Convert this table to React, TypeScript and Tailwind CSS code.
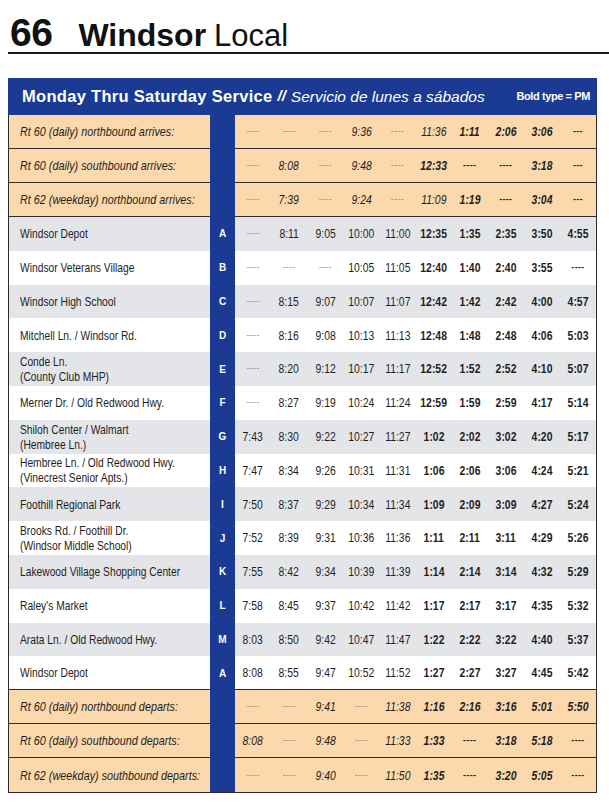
import React from "react";

const font = { fontFamily: '"Liberation Sans", Arial, sans-serif' };

type Row = {
  name: string[];
  letter?: string;
  times: string[];
  boldFrom: number;
  orange?: boolean;
  lineBelow?: boolean;
};

const rows: Row[] = [
  { name: ["Rt 60 (daily) northbound arrives:"], orange: true, boldFrom: 6, times: ["----", "----", "----", "9:36", "----", "11:36", "1:11", "2:06", "3:06", "---"] },
  { name: ["Rt 60 (daily) southbound arrives:"], orange: true, boldFrom: 5, times: ["----", "8:08", "----", "9:48", "----", "12:33", "----", "----", "3:18", "---"] },
  { name: ["Rt 62 (weekday) northbound arrives:"], orange: true, boldFrom: 6, times: ["----", "7:39", "----", "9:24", "----", "11:09", "1:19", "----", "3:04", "---"] },
  { name: ["Windsor Depot"], letter: "A", boldFrom: 5, times: ["----", "8:11", "9:05", "10:00", "11:00", "12:35", "1:35", "2:35", "3:50", "4:55"] },
  { name: ["Windsor Veterans Village"], letter: "B", boldFrom: 5, times: ["----", "----", "----", "10:05", "11:05", "12:40", "1:40", "2:40", "3:55", "----"] },
  { name: ["Windsor High School"], letter: "C", boldFrom: 5, times: ["----", "8:15", "9:07", "10:07", "11:07", "12:42", "1:42", "2:42", "4:00", "4:57"] },
  { name: ["Mitchell Ln. / Windsor Rd."], letter: "D", boldFrom: 5, times: ["----", "8:16", "9:08", "10:13", "11:13", "12:48", "1:48", "2:48", "4:06", "5:03"] },
  { name: ["Conde Ln.", "(County Club MHP)"], letter: "E", boldFrom: 5, times: ["----", "8:20", "9:12", "10:17", "11:17", "12:52", "1:52", "2:52", "4:10", "5:07"] },
  { name: ["Merner Dr. / Old Redwood Hwy."], letter: "F", boldFrom: 5, times: ["----", "8:27", "9:19", "10:24", "11:24", "12:59", "1:59", "2:59", "4:17", "5:14"] },
  { name: ["Shiloh Center / Walmart", "(Hembree Ln.)"], letter: "G", boldFrom: 5, times: ["7:43", "8:30", "9:22", "10:27", "11:27", "1:02", "2:02", "3:02", "4:20", "5:17"] },
  { name: ["Hembree Ln. / Old Redwood Hwy.", "(Vinecrest Senior Apts.)"], letter: "H", boldFrom: 5, times: ["7:47", "8:34", "9:26", "10:31", "11:31", "1:06", "2:06", "3:06", "4:24", "5:21"] },
  { name: ["Foothill Regional Park"], letter: "I", boldFrom: 5, times: ["7:50", "8:37", "9:29", "10:34", "11:34", "1:09", "2:09", "3:09", "4:27", "5:24"] },
  { name: ["Brooks Rd. / Foothill Dr.", "(Windsor Middle School)"], letter: "J", boldFrom: 5, times: ["7:52", "8:39", "9:31", "10:36", "11:36", "1:11", "2:11", "3:11", "4:29", "5:26"] },
  { name: ["Lakewood Village Shopping Center"], letter: "K", boldFrom: 5, times: ["7:55", "8:42", "9:34", "10:39", "11:39", "1:14", "2:14", "3:14", "4:32", "5:29"] },
  { name: ["Raley's Market"], letter: "L", boldFrom: 5, times: ["7:58", "8:45", "9:37", "10:42", "11:42", "1:17", "2:17", "3:17", "4:35", "5:32"] },
  { name: ["Arata Ln. / Old Redwood Hwy."], letter: "M", boldFrom: 5, times: ["8:03", "8:50", "9:42", "10:47", "11:47", "1:22", "2:22", "3:22", "4:40", "5:37"] },
  { name: ["Windsor Depot"], letter: "A", boldFrom: 5, lineBelow: true, times: ["8:08", "8:55", "9:47", "10:52", "11:52", "1:27", "2:27", "3:27", "4:45", "5:42"] },
  { name: ["Rt 60 (daily) northbound departs:"], orange: true, boldFrom: 5, times: ["----", "----", "9:41", "----", "11:38", "1:16", "2:16", "3:16", "5:01", "5:50"] },
  { name: ["Rt 60 (daily) southbound departs:"], orange: true, boldFrom: 5, times: ["8:08", "----", "9:48", "----", "11:33", "1:33", "----", "3:18", "5:18", "----"] },
  { name: ["Rt 62 (weekday) southbound departs:"], orange: true, boldFrom: 5, times: ["----", "----", "9:40", "----", "11:50", "1:35", "----", "3:20", "5:05", "----"] },
];

function TimeCell({ t, bold, italic }: { t: string; bold: boolean; italic: boolean }) {
  if (t.startsWith("-")) {
    return (
      <div className="flex items-center justify-center">
        <span className={`text-[9px] tracking-[0.3px] ${bold ? "font-bold text-[#222]" : "text-[#8a8a8a]"}`}>{t}</span>
      </div>
    );
  }
  return (
    <div className="flex items-center justify-center">
      <span className={`text-[13px] scale-x-[0.8] text-[#1e1e1e] ${bold ? "font-bold" : ""} ${italic ? "italic" : ""}`}>{t}</span>
    </div>
  );
}

export default function App() {
  let stripe = 0;
  return (
    <div className="w-[609px] h-[804px] bg-white overflow-hidden" style={font}>
      {/* Title */}
      <div className="ml-[8px] h-[54px] pt-[15px] pl-[2px] border-b-2 border-[#1a1a1a] flex items-baseline overflow-hidden">
        <span className="text-[39px] leading-[36px] font-black text-[#111] tracking-[-0.5px]">66</span>
        <span className="ml-[26px] text-[32px] leading-[36px] font-black text-[#111]">Windsor</span>
        <span className="ml-[8px] text-[31px] leading-[36px] text-[#111]">Local</span>
      </div>

      {/* Panel */}
      <div className="ml-[8px] mt-[24px] w-[589px]">
        <div className="h-[37px] bg-[#1b3a93] flex items-center pl-[14px] pr-[7px] text-white">
          <span className="text-[16.5px] font-bold tracking-[0.3px]">Monday Thru Saturday Service</span>
          <span className="ml-[5px] text-[15px] font-bold italic">//</span>
          <span className="ml-[5px] text-[15.5px] italic">Servicio de lunes a sábados</span>
          <span className="ml-auto text-[11px] font-bold tracking-[-0.4px]">Bold type = PM</span>
        </div>
        <div className="border-x border-b border-[#2a2a2a]">
          {rows.map((r, i) => {
            let bg = "bg-[#fcd8ad]";
            if (!r.orange) {
              bg = stripe % 2 === 0 ? "bg-[#e4e5e9]" : "bg-white";
              stripe++;
            }
            const last = i === rows.length - 1;
            const line = (r.orange || r.lineBelow) && !last ? "border-b border-[#2e2e2e]" : "";
            return (
              <div key={i} className={`grid grid-cols-[201px_25px_minmax(0,1fr)] ${r.orange || r.lineBelow ? "h-[34px]" : "h-[33.8px]"}`}>
                <div className={`${bg} ${line} flex flex-col justify-center pl-[11px] text-[13.5px] leading-[15px] text-[#1e1e1e] ${r.orange ? "italic" : ""}`}>
                  {r.name.map((n, j) => (
                    <span key={j} className={`whitespace-nowrap origin-left ${r.orange ? "scale-x-[0.8]" : "scale-x-[0.76]"}`}>{n}</span>
                  ))}
                </div>
                <div className="bg-[#1b3a93] flex items-center justify-center">
                  {r.letter && <span className="text-[10px] font-black text-white">{r.letter}</span>}
                </div>
                <div className={`${bg} ${line} grid grid-cols-10`}>
                  {r.times.map((t, k) => (
                    <TimeCell key={k} t={t} bold={k >= r.boldFrom} italic={!!r.orange} />
                  ))}
                </div>
              </div>
            );
          })}
        </div>
      </div>
    </div>
  );
}
